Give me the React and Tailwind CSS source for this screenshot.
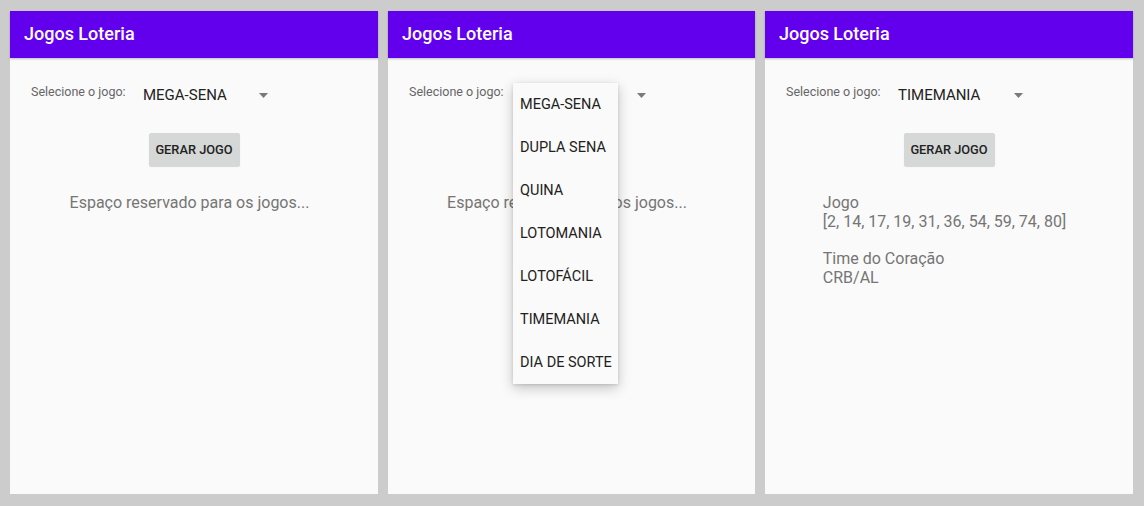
const OPTIONS = ['MEGA-SENA', 'DUPLA SENA', 'QUINA', 'LOTOMANIA', 'LOTOFÁCIL', 'TIMEMANIA', 'DIA DE SORTE']

function Arrow() {
  return (
    <svg width="9" height="5" viewBox="0 0 9 5" className="shrink-0">
      <path d="M0 0h9L4.5 5z" fill="#7a7a7a" />
    </svg>
  )
}

function Header() {
  return (
    <header className="flex h-[47px] shrink-0 items-center bg-[#6200ee] pb-[1px] pl-[14px] shadow-[0_1px_2px_rgba(0,0,0,0.25)]">
      <h1 className="text-[18px] font-medium leading-none text-white">Jogos Loteria</h1>
    </header>
  )
}

function Spinner({ value, covered }) {
  return (
    <div className="flex h-[24px] items-center pl-[21px]">
      <span className="mb-[6px] w-[112px] text-[12.5px] text-[#666666]">Selecione o jogo:</span>
      <div className="flex w-[125px] items-center justify-between">
        {/* under the open menu the value is hidden anyway */}
        <span className={`text-[15px] text-[#222222] ${covered ? 'invisible' : ''}`}>{value}</span>
        <Arrow />
      </div>
    </div>
  )
}

function Screen({ value, width = 'w-[368px]', children, menu = false }) {
  return (
    <div className={`relative flex h-[483px] ${width} shrink-0 flex-col bg-[#fafafa]`}>
      <Header />
      <div className="flex flex-col pt-[25px]">
        <Spinner value={value} covered={menu} />
        <div className="mt-[26px] flex justify-center">
          <button className={`h-[33px] w-[91px] rounded-[2px] bg-[#d6d7d7] text-[12.8px] font-medium text-[#222222] shadow-[0_1px_1px_rgba(0,0,0,0.15)] ${menu ? 'invisible' : ''}`}>
            GERAR JOGO
          </button>
        </div>
        <div className="mt-[28px] flex justify-center pr-[9px] text-[16px] leading-[18.7px] text-[#757575]">
          {children}
        </div>
      </div>

      {menu && (
        <div className="absolute left-[125px] top-[72px] w-[105px] bg-[#fafafa] shadow-[0_4px_12px_rgba(0,0,0,0.22),0_1px_3px_rgba(0,0,0,0.12)]">
          {OPTIONS.map((o) => (
            <div key={o} className="flex h-[43px] items-center pl-[7px] pt-[1px] text-[14.5px] text-[#212121]">
              {o}
            </div>
          ))}
        </div>
      )}
    </div>
  )
}

export default function App() {
  return (
    <div className="flex h-[506px] w-[1144px] gap-[10px] bg-[#cccccc] pl-[10px] pt-[11px] font-['Roboto',sans-serif]">
      <Screen value="MEGA-SENA">
        <p>Espaço reservado para os jogos...</p>
      </Screen>

      <Screen value="MEGA-SENA" width="w-[367px]" menu>
        <p>Espaço reservado para os jogos...</p>
      </Screen>

      <Screen value="TIMEMANIA">
        <div>
          <p>Jogo</p>
          <p>[2, 14, 17, 19, 31, 36, 54, 59, 74, 80]</p>
          <p className="mt-[18.7px]">Time do Coração</p>
          <p>CRB/AL</p>
        </div>
      </Screen>
    </div>
  )
}
